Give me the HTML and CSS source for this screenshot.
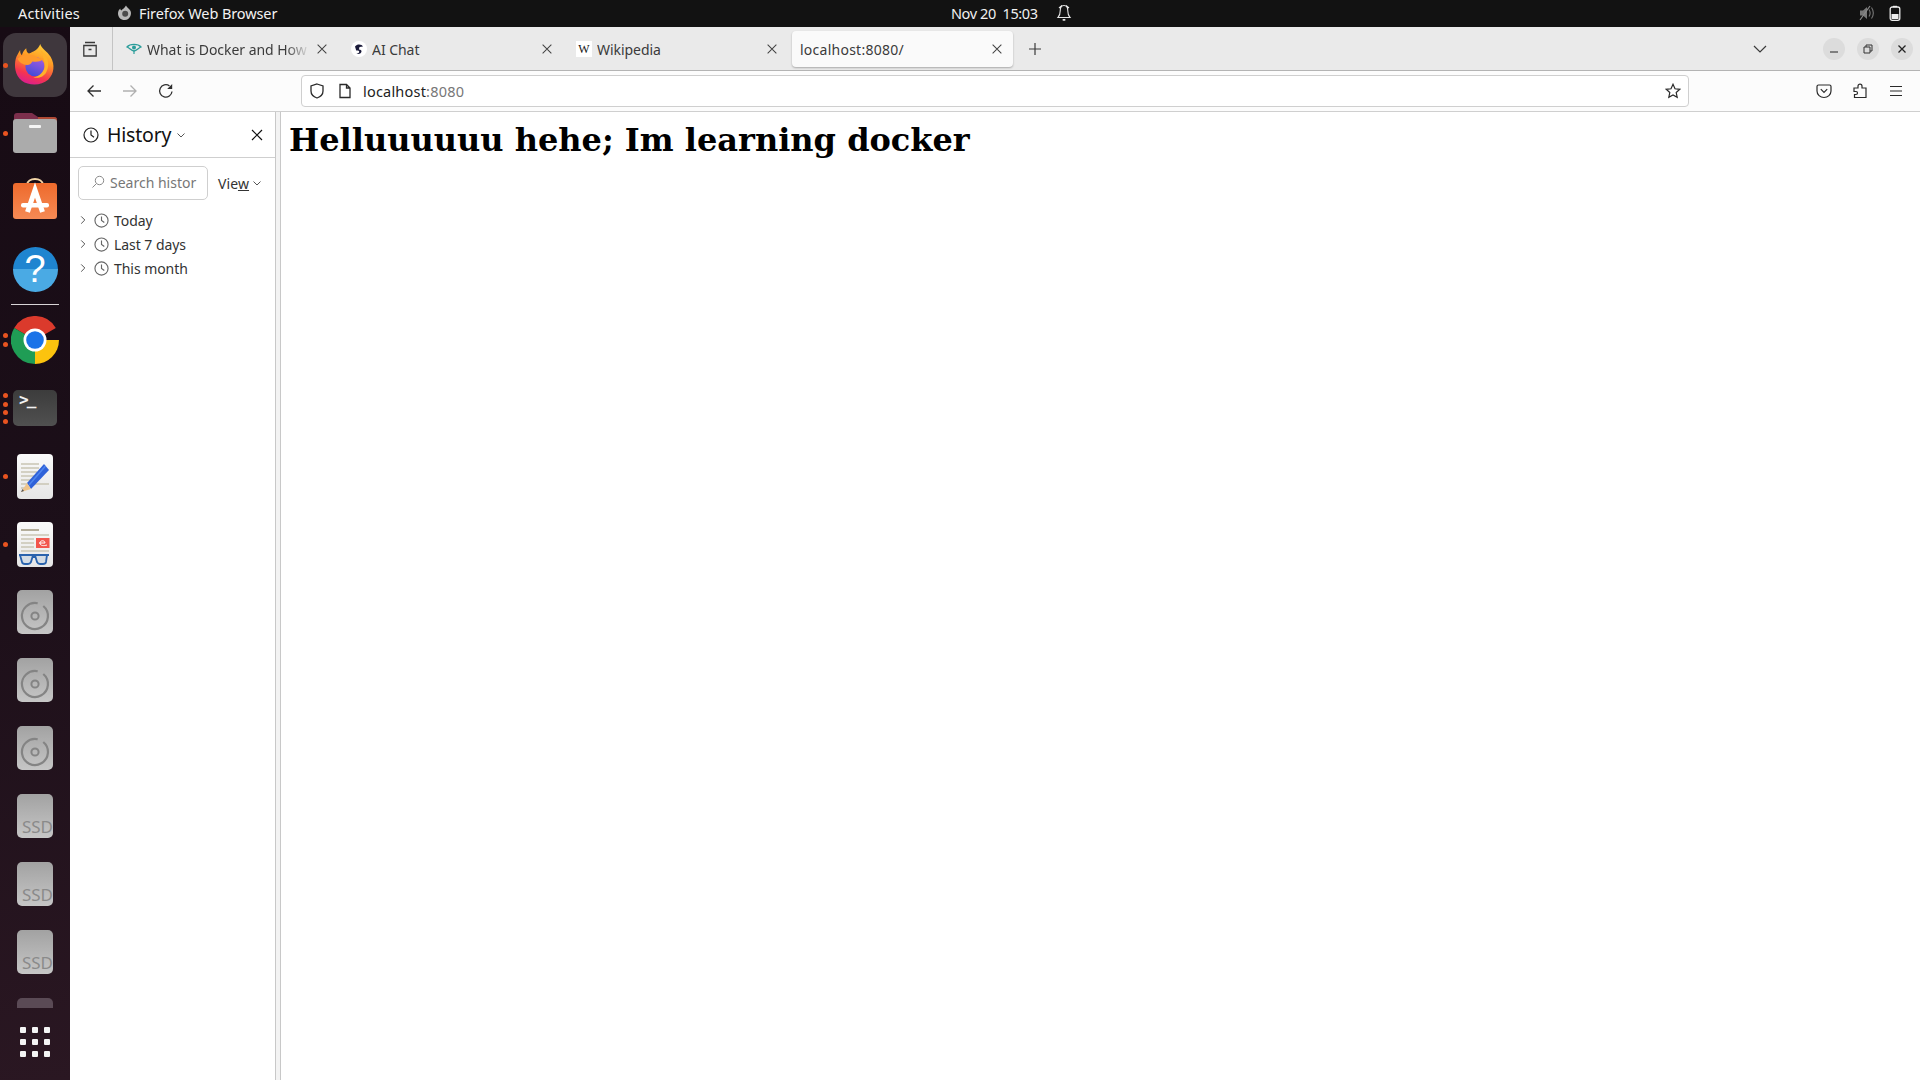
FILE: index.html
```html
<!DOCTYPE html>
<html lang="en">
<head>
<meta charset="utf-8">
<title>localhost:8080</title>
<link rel="stylesheet" href="styles.css">
</head>
<body>
<svg class="defs" width="0" height="0" aria-hidden="true">
  <defs>
    <symbol id="i-x" viewBox="0 0 16 16"><path d="M3 3l10 10M13 3L3 13" fill="none" stroke="currentColor" stroke-width="1.2"/></symbol>
    <symbol id="i-clock" viewBox="0 0 16 16"><circle cx="8" cy="8" r="7" fill="none" stroke="currentColor" stroke-width="1.2"/><path d="M8 3.6V8l3 2.2" fill="none" stroke="currentColor" stroke-width="1.2"/></symbol>
    <symbol id="i-chev" viewBox="0 0 10 10"><path d="M1.5 3.5L5 7l3.5-3.5" fill="none" stroke="currentColor" stroke-width="1"/></symbol>
    <symbol id="i-right" viewBox="0 0 10 10"><path d="M3.2 1.4L6.8 5 3.2 8.6" fill="none" stroke="currentColor" stroke-width="1"/></symbol>
    <symbol id="i-disc" viewBox="0 0 36 44"><circle cx="18" cy="26" r="3.6" fill="none" stroke="#848484" stroke-width="2"/><path d="M24 14.500A13 13 0 1 1 18 13" transform="rotate(12 18 26)" fill="none" stroke="#848484" stroke-width="2.200"/></symbol>
    <linearGradient id="g-ffbody" x1="0.75" y1="0" x2="0.4" y2="1"><stop offset="0" stop-color="#ffd23a"/><stop offset="0.4" stop-color="#ff9a24"/><stop offset="0.78" stop-color="#f5354f"/><stop offset="1" stop-color="#dc1f8c"/></linearGradient>
    <linearGradient id="g-ffglobe" x1="0.7" y1="0" x2="0.3" y2="1"><stop offset="0" stop-color="#a35be0"/><stop offset="1" stop-color="#3f4bd8"/></linearGradient>
    <linearGradient id="g-paper" x1="0" y1="0" x2="0" y2="1"><stop offset="0" stop-color="#fafafa"/><stop offset="1" stop-color="#e6e6e6"/></linearGradient>
    <linearGradient id="g-store" x1="0" y1="0" x2="0" y2="1"><stop offset="0" stop-color="#ee6a2c"/><stop offset="1" stop-color="#f58a55"/></linearGradient>
  </defs>
</svg>

<div class="screen">
  <header class="topbar">
    <span class="activities">Activities</span>
    <span class="appname">
      <svg class="top-ff" viewBox="0 0 16 16"><path d="M9 .5c.6 2 3.2 3 4.400 5.200 1.700 3.300-.4 9-5.400 9.300C4 15.200 1 12.300 1 8.500c0-2.200 1-4 2.300-5 0 1 .4 1.500 1 1.900C5.500 4.200 7 3.800 9 .5z" fill="#b9b9b9"/><circle cx="8.200" cy="8.800" r="3" fill="#4b4b4b"/></svg>
      <span>Firefox Web Browser</span>
    </span>
    <span class="clock">Nov 20&nbsp; 15:03</span>
    <svg class="bell" viewBox="0 0 16 18"><path d="M8 1.500c-3 0-3.800 2.500-3.800 5.500 0 3-.8 5-2.200 6.500h12c-1.400-1.500-2.200-3.500-2.200-6.500 0-3-.8-5.500-3.800-5.500zM6 1.500L3 4M10 1.500L13 4" fill="none" stroke="#e6e6e6" stroke-width="1.100"/><rect x="6.500" y="15" width="3" height="1.800" rx=".8" fill="#e6e6e6"/></svg>
    <span class="tray">
      <svg class="tray-vol" viewBox="0 0 16 16"><path d="M1 5.500h3L8 2v12l-4-3.500H1z" fill="#777"/><path d="M10 4.500c1.300 2 1.300 5 0 7M12.500 2.500c2.200 3.300 2.200 7.700 0 11" fill="none" stroke="#777" stroke-width="1.100"/><path d="M1 15L11 1" stroke="#8a8a8a" stroke-width="1.200"/></svg>
      <svg class="tray-bat" viewBox="0 0 12 16"><path d="M4 .8h4v1.400H4z" fill="#eee"/><rect x="1.200" y="2" width="9.600" height="13.300" rx="2" fill="none" stroke="#eee" stroke-width="1.300"/><rect x="2.500" y="9" width="7" height="5" fill="#eee"/></svg>
    </span>
  </header>

  <div class="desk">
    <nav class="dock">
      <div class="dock-scroll">
        <div class="slot slot-active">
          <span class="run run-1"></span>
          <svg class="ic-ff" viewBox="0 0 48 48">
            <path d="M30 1C31 6 38 9 42 16C47 25 46 35 39 42C31 49 17 49 9 43C1 37 0 26 2 18C3 14 5 12 7 8C7 12 8 13 9 14C10 10 12 8 14 6C14 9 15 11 17 12C22 10 28 7 30 1Z" fill="url(#g-ffbody)"/>
            <circle cx="24" cy="27" r="11" fill="url(#g-ffglobe)"/>
            <path d="M4 18C10 13 20 12 26 16C29 18 31 18 34 17C32 21 26 22 21 21C20 23 18 25 15 25C10 25 6 22 4 18Z" fill="#ff9a2b"/>
            <path d="M30 8C38 13 42 24 37 33C34 39 27 41 22 39C28 39 35 33 35 26C35 20 33 14 30 8Z" fill="#ffb12a"/>
          </svg>
        </div>
        <div class="slot">
          <span class="run run-1"></span>
          <svg class="ic-files" viewBox="0 0 44 40">
            <path d="M1 3a3 3 0 0 1 3-3h15l6 4h16a3 3 0 0 1 3 3v10H1z" fill="#7c2f4c"/>
            <path d="M25 4h16a3 3 0 0 1 3 3v6H25z" fill="#b04a34"/>
            <rect y="6" width="44" height="34" rx="3" fill="#ababab"/>
            <rect x="16" y="12" width="12" height="3" rx="1" fill="#f4f4f4"/>
          </svg>
        </div>
        <div class="slot">
          <svg class="ic-store" viewBox="0 0 44 42">
            <path d="M14 8C14 0 30 0 30 8" fill="none" stroke="#f3d6a8" stroke-width="1.800"/>
            <rect y="6" width="44" height="36" rx="3" fill="url(#g-store)"/>
            <path d="M14.500 35L22 13l7.500 22" fill="none" stroke="#fff" stroke-width="5"/>
            <rect x="8" y="26" width="28" height="4.500" rx="2" fill="#fff"/>
          </svg>
        </div>
        <div class="slot">
          <div class="ic-help">?</div>
        </div>
        <div class="dock-sep"></div>
        <div class="slot">
          <span class="run run-2a"></span><span class="run run-2b"></span>
          <svg class="ic-chrome" viewBox="0 0 48 48">
            <path d="M24 24L3.200 12A24 24 0 0 1 44.800 12z" fill="#db3a2c"/>
            <path d="M24 24H48A24 24 0 0 1 24 48z" fill="#fcc30e"/>
            <path d="M24 24L3.200 12A24 24 0 0 0 24 48z" fill="#1f9d55"/>
            <circle cx="24" cy="24" r="11.500" fill="#fff"/>
            <circle cx="24" cy="24" r="8.800" fill="#1a73e8"/>
          </svg>
        </div>
        <div class="slot">
          <span class="run run-4a"></span><span class="run run-4b"></span><span class="run run-4c"></span><span class="run run-4d"></span>
          <div class="ic-term"><span>&gt;_</span></div>
        </div>
        <div class="slot">
          <span class="run run-1"></span>
          <svg class="tile" viewBox="0 0 36 45">
            <rect width="36" height="45" rx="4" fill="url(#g-paper)"/>
            <path d="M4 10h18M4 14h18M4 18h16M4 22h14M4 26h12M4 30h28M4 34h8" stroke="#c9c5b4" stroke-width="1.700"/>
            <path d="M27 10L32 16L14 35L10 29Z" fill="#2f62d9"/>
            <path d="M28.500 12L12 31" stroke="#4f86ee" stroke-width="1.500"/>
            <path d="M10 29L14 35L4 38Z" fill="#edc48c"/>
            <path d="M4 38l3-1-1.500-2z" fill="#555"/>
          </svg>
        </div>
        <div class="slot">
          <span class="run run-1"></span>
          <svg class="tile" viewBox="0 0 36 45">
            <rect width="36" height="45" rx="4" fill="url(#g-paper)"/>
            <path d="M4 8h18" stroke="#b3ad9a" stroke-width="2"/>
            <path d="M4 13h28M4 17h13M4 21h13M4 25h13M4 29h28" stroke="#c9c5b4" stroke-width="1.600"/>
            <rect x="19" y="16" width="13.500" height="10" fill="#f2554d"/>
            <path d="M22 21h6c0-3-5-3-5 0 0 3 4 3 7 2" fill="none" stroke="#fff" stroke-width="1"/>
            <path d="M3 33l2 7q.4 2 3 2h3q2 0 3-2l1.500-5h3l1.500 5q1 2 3 2h3q2.600 0 3-2l1-7z" fill="#d4dce4"/>
            <path d="M2 33h30M3 33l2 7q.4 2 3 2h3q2 0 3-2l1.500-5h3l1.500 5q1 2 3 2h3q2.600 0 3-2l1-7" fill="none" stroke="#2a63ad" stroke-width="1.800"/>
          </svg>
        </div>
        <div class="slot"><div class="grey-tile"><svg class="disc" viewBox="0 0 36 44"><use href="#i-disc"/></svg></div></div>
        <div class="slot"><div class="grey-tile"><svg class="disc" viewBox="0 0 36 44"><use href="#i-disc"/></svg></div></div>
        <div class="slot"><div class="grey-tile"><svg class="disc" viewBox="0 0 36 44"><use href="#i-disc"/></svg></div></div>
        <div class="slot"><div class="grey-tile ssd"><span>SSD</span></div></div>
        <div class="slot"><div class="grey-tile ssd"><span>SSD</span></div></div>
        <div class="slot"><div class="grey-tile ssd"><span>SSD</span></div></div>
        <div class="slot"><div class="dark-tile"></div></div>
      </div>
      <div class="dock-apps">
        <div class="app-grid"><i></i><i></i><i></i><i></i><i></i><i></i><i></i><i></i><i></i></div>
      </div>
    </nav>

    <main class="browser">
      <div class="tabbar">
        <div class="fxview">
          <svg class="i18" viewBox="0 0 18 18"><path d="M4 2.500h10M2.800 6.500V16h12.400V5.500H2.800zM7.500 9.500h3" fill="none" stroke="#3a3a3a" stroke-width="1.300"/></svg>
        </div>
        <div class="tab">
          <svg class="favicon" viewBox="0 0 16 16"><path d="M1 6c3-3.500 11-3.500 14 0-3 1-4 4-7 4S4 7 1 6z" fill="none" stroke="#2a9d9a" stroke-width="1.300"/><circle cx="8" cy="6.500" r="2" fill="#2a9d9a"/><path d="M8 10v3" stroke="#2a9d9a" stroke-width="1.200"/></svg>
          <span class="tab-title fade">What is Docker and How Does</span>
          <svg class="tab-x"><use href="#i-x"/></svg>
        </div>
        <div class="tab">
          <svg class="favicon" viewBox="0 0 16 16"><circle cx="8" cy="8" r="8" fill="#fff"/><path d="M4 5.500C6 2.500 11 3 12 5.500L8.500 6l-.6 2.500c2 0 3 1 2.500 2.500-.6 1.800-3 2.500-5 1.500 2 0 3-.8 2.800-2-.2-1-1.400-1.200-3-1z" fill="#1b1b3a"/></svg>
          <span class="tab-title">AI Chat</span>
          <svg class="tab-x"><use href="#i-x"/></svg>
        </div>
        <div class="tab">
          <div class="favicon fav-w">W</div>
          <span class="tab-title">Wikipedia</span>
          <svg class="tab-x"><use href="#i-x"/></svg>
        </div>
        <div class="tab tab-active">
          <span class="tab-title">localhost:8080/</span>
          <svg class="tab-x"><use href="#i-x"/></svg>
        </div>
        <svg class="newtab" viewBox="0 0 14 14"><path d="M7 1v12M1 7h12" stroke="#3a3a3a" stroke-width="1.200"/></svg>
        <div class="tabbar-right">
          <svg class="alltabs" viewBox="0 0 14 8"><path d="M1 1l6 6 6-6" fill="none" stroke="#3a3a3a" stroke-width="1.200"/></svg>
          <div class="winbtns">
            <div class="winbtn"><svg viewBox="0 0 10 10"><path d="M1 8h8" stroke="#333" stroke-width="1.100"/></svg></div>
            <div class="winbtn"><svg viewBox="0 0 10 10"><path d="M1 3h6v6H1zM3 3V1h6v6H7" fill="none" stroke="#333" stroke-width="1"/></svg></div>
            <div class="winbtn"><svg viewBox="0 0 10 10"><path d="M1.500 1.500l7 7M8.500 1.500l-7 7" stroke="#222" stroke-width="1.300"/></svg></div>
          </div>
        </div>
      </div>

      <div class="toolbar">
        <div class="navbtns">
          <svg class="i16" viewBox="0 0 16 16"><path d="M15 8H2M7.500 2.500L2 8l5.500 5.500" fill="none" stroke="#2f2f2f" stroke-width="1.300"/></svg>
          <svg class="i16" viewBox="0 0 16 16"><path d="M1 8h13M8.500 2.500L14 8l-5.500 5.500" fill="none" stroke="#b0b0b0" stroke-width="1.300"/></svg>
          <svg class="i16" viewBox="0 0 16 16"><path d="M14 8.500A6.200 6.200 0 1 1 11.500 2.900" fill="none" stroke="#2f2f2f" stroke-width="1.300"/><path d="M14.200 1v5h-5z" fill="#2f2f2f"/></svg>
        </div>
        <div class="urlbar">
          <svg class="i16" viewBox="0 0 16 16"><path d="M8 1l6 2v5c0 4-3 6-6 7-3-1-6-3-6-7V3z" fill="none" stroke="#2a2a2a" stroke-width="1.300"/></svg>
          <svg class="i16 url-page" viewBox="0 0 16 16"><path d="M3 1.500h6.500L13 5v9.500H3zM9.500 1.500V5H13" fill="none" stroke="#2a2a2a" stroke-width="1.300"/></svg>
          <span class="url-text">localhost<span class="url-port">:8080</span></span>
          <svg class="i16 url-star" viewBox="0 0 16 16"><path d="M8 1.300l2 4.500 4.800.5-3.600 3.200 1 4.800L8 12l-4.200 2.300 1-4.800L1.200 6.300 6 5.800z" fill="none" stroke="#2a2a2a" stroke-width="1.200"/></svg>
        </div>
        <div class="toolbtns">
          <svg class="i16" viewBox="0 0 16 16"><path d="M2.500 2h11A1.500 1.500 0 0 1 15 3.500V8a7 6.500 0 0 1-14 0V3.500A1.500 1.500 0 0 1 2.500 2z" fill="none" stroke="#2a2a2a" stroke-width="1.200"/><path d="M4.800 6.200L8 9.400l3.200-3.200" fill="none" stroke="#2a2a2a" stroke-width="1.200"/></svg>
          <svg class="i16" viewBox="0 0 16 16"><path d="M2 5h4V3.200a2 2 0 1 1 4 0V5h4v9.500H2.500v-3H4a1.500 1.500 0 0 0 0-3H2z" fill="none" stroke="#2a2a2a" stroke-width="1.200"/></svg>
          <svg class="i16" viewBox="0 0 16 16"><path d="M2 3.500h12M2 8h12M2 12.500h12" stroke="#2a2a2a" stroke-width="1.200"/></svg>
        </div>
      </div>

      <div class="content">
        <aside class="sidebar">
          <div class="side-head">
            <svg class="side-clock"><use href="#i-clock"/></svg>
            <span class="side-title">History</span>
            <svg class="side-chev"><use href="#i-chev"/></svg>
            <svg class="side-close"><use href="#i-x"/></svg>
          </div>
          <div class="side-search">
            <div class="searchbox">
              <svg class="search-ic" viewBox="0 0 14 14"><circle cx="8.500" cy="5.500" r="4.200" fill="none" stroke="#8a8a8a" stroke-width="1"/><path d="M5.500 8.500L1.500 12.500" stroke="#8a8a8a" stroke-width="1"/></svg>
              <span class="search-ph">Search histor</span>
            </div>
            <span class="viewbtn">Vie<u>w</u></span>
            <svg class="view-chev"><use href="#i-chev"/></svg>
          </div>
          <ul class="tree">
            <li class="tree-row"><svg class="twisty"><use href="#i-right"/></svg><svg class="tree-clock"><use href="#i-clock"/></svg><span>Today</span></li>
            <li class="tree-row"><svg class="twisty"><use href="#i-right"/></svg><svg class="tree-clock"><use href="#i-clock"/></svg><span>Last 7 days</span></li>
            <li class="tree-row"><svg class="twisty"><use href="#i-right"/></svg><svg class="tree-clock"><use href="#i-clock"/></svg><span>This month</span></li>
          </ul>
        </aside>
        <div class="splitter"></div>
        <article class="page">
          <h1>Helluuuuuu hehe; Im learning docker</h1>
        </article>
      </div>
    </main>
  </div>
</div>
</body>
</html>
```
FILE: styles.css
```css
* { box-sizing: border-box; }
html, body { margin: 0; height: 100%; overflow: hidden; background: #fff; }
body { font-family: "Noto Sans", "Open Sans", sans-serif; color: #222; }
.defs { position: absolute; }
svg { display: block; flex: none; }

.screen { width: 1920px; height: 1080px; display: flex; flex-direction: column; }

/* top bar */
.topbar { height: 27px; flex: none; background: #121212; color: #f2f2f2; display: flex; align-items: center; font-size: 14.5px; padding: 0 0 2px 18px; letter-spacing: -0.1px; }
.activities { width: 99px; letter-spacing: 0.15px; }
.appname { display: flex; align-items: center; gap: 6px; width: 834px; }
.top-ff { width: 16px; height: 16px; }
.clock { width: 105px; color: #f0f0f0; letter-spacing: -0.4px; }
.bell { width: 16px; height: 18px; }
.tray { margin-left: auto; display: flex; align-items: center; gap: 14px; padding-right: 19px; }
.tray-vol { width: 16px; height: 16px; }
.tray-bat { width: 12px; height: 16px; }

.desk { flex: 1; display: flex; min-height: 0; }

/* dock */
.dock { width: 70px; flex: none; display: flex; flex-direction: column; background: linear-gradient(170deg, #170b14 0%, #1c0f19 50%, #2a1722 100%); }
.dock-scroll { height: 981px; flex: none; overflow: hidden; padding-top: 4px; }
.slot { height: 68px; display: flex; align-items: center; justify-content: center; position: relative; }
.slot-active::before { content: ""; position: absolute; left: 3px; right: 3px; top: 2px; bottom: 2px; border-radius: 13px; background: #3f373d; }
.slot-active svg { position: relative; }
.run { position: absolute; left: 3px; width: 5px; height: 5px; border-radius: 50%; background: #e95420; z-index: 1; }
.run-1 { top: 32px; }
.run-2a { top: 27px; }
.run-2b { top: 36px; }
.run-4a { top: 19px; }
.run-4b { top: 28px; }
.run-4c { top: 36px; }
.run-4d { top: 45px; }
.ic-ff { width: 42px; height: 44px; margin-top: -3px; }
.ic-files { width: 44px; height: 40px; }
.ic-store { width: 44px; height: 42px; margin-top: -6px; }
.ic-help { width: 45px; height: 45px; border-radius: 50%; background: linear-gradient(#1f85d0 50%, #4aaae4 50%); color: #fff; text-align: center; font-size: 38px; line-height: 45px; font-family: "Liberation Sans", sans-serif; }
.dock-sep { height: 3px; padding: 1px 11px; }
.dock-sep::before { content: ""; display: block; height: 1px; background: #d8d4d6; }
.ic-chrome { width: 48px; height: 48px; }
.ic-term { width: 44px; height: 36px; border-radius: 5px; background: linear-gradient(#3c3c3c, #505050); color: #f2f2f2; font: bold 16px/1 "DejaVu Sans Mono", monospace; letter-spacing: -2px; padding: 2px 0 0 6px; }
.tile { width: 36px; height: 45px; }
.grey-tile { width: 36px; height: 44px; border-radius: 5px; background: linear-gradient(#a2a2a2, #c6c6c6); display: flex; align-items: flex-end; justify-content: flex-end; }
.disc { width: 36px; height: 44px; }
.ssd span { font-size: 17px; line-height: 1; color: #8a8a8a; padding: 0 0 3px 0; }
.dark-tile { width: 36px; height: 44px; border-radius: 5px; background: #5a4a55; }
.dock-apps { flex: 1; display: flex; align-items: center; justify-content: center; padding-bottom: 4px; }
.app-grid { display: grid; grid-template-columns: repeat(3, 6px); gap: 6px; }
.app-grid i { width: 6px; height: 6px; border-radius: 1px; background: #f4f4f4; }

/* browser */
.browser { flex: 1; min-width: 0; display: flex; flex-direction: column; }
.tabbar { height: 44px; flex: none; display: flex; align-items: center; background: #eaeaea; border-bottom: 1px solid #b4b4b4; }
.fxview { width: 43px; height: 43px; border-right: 1px solid #c4c4c4; display: flex; align-items: center; justify-content: center; padding-right: 3px; margin-right: 2px; }
.i18 { width: 18px; height: 18px; }
.tab { width: 225px; height: 36px; padding: 0 11px 0 11px; display: flex; align-items: center; gap: 5px; font-size: 14px; color: #3b3b3b; border-radius: 4px; }
.tab-active { width: 221px; margin: 0 2px; padding: 0 9px 0 8px; background: #fafafa; box-shadow: 0 1px 2px rgba(0,0,0,.28); }
.tab-active .tab-title { letter-spacing: 0.25px; }
.favicon { width: 16px; height: 16px; flex: none; }
.fav-w { background: #fff; color: #111; font: 12px/16px "Liberation Serif", serif; text-align: center; }
.tab-title { flex: 1; min-width: 0; overflow: hidden; white-space: nowrap; letter-spacing: -0.05px; padding-top: 2px; }
.fade { -webkit-mask-image: linear-gradient(90deg, #000 85%, transparent); mask-image: linear-gradient(90deg, #000 85%, transparent); }
.tab-x { width: 14px; height: 14px; flex: none; color: #444; }
.newtab { width: 14px; height: 14px; margin-left: 13px; }
.tabbar-right { margin-left: auto; display: flex; align-items: center; }
.alltabs { width: 14px; height: 8px; margin-right: 56px; }
.winbtns { display: flex; gap: 12px; padding-right: 7px; }
.winbtn { width: 22px; height: 22px; border-radius: 50%; background: #dcdcdc; display: flex; align-items: center; justify-content: center; }
.winbtn svg { width: 10px; height: 10px; }

.toolbar { height: 41px; flex: none; display: flex; align-items: center; background: #fcfcfc; border-bottom: 1px solid #cfcfcf; }
.i16 { width: 16px; height: 16px; }
.navbtns { display: flex; gap: 20px; width: 231px; padding-left: 16px; }
.urlbar { width: 1388px; height: 32px; border: 1px solid #cfcfcf; border-radius: 4px; background: #fff; display: flex; align-items: center; padding: 0 7px; font-size: 14.5px; }
.url-page { margin-left: 12px; }
.url-text { margin-left: 10px; color: #222; letter-spacing: 0.2px; }
.url-port { color: #777; }
.url-star { margin-left: auto; }
.toolbtns { display: flex; gap: 20px; padding-left: 127px; }

.content { flex: 1; min-height: 0; display: flex; background: #fff; }
.sidebar { width: 206px; flex: none; border-right: 1px solid #c8c8c8; font-size: 14px; }
.side-head { height: 46px; display: flex; align-items: center; padding: 0 10px 0 13px; border-bottom: 1px solid #cfcfcf; color: #111; }
.side-clock { width: 16px; height: 16px; color: #222; }
.side-title { font-size: 19.5px; margin-left: 8px; letter-spacing: -0.2px; }
.side-chev { width: 10px; height: 10px; margin-left: 5px; color: #555; }
.side-close { width: 16px; height: 16px; margin-left: auto; color: #111; }
.side-search { height: 42px; padding: 8px 0 0 8px; display: flex; align-items: center; }
.searchbox { width: 130px; height: 34px; border: 1px solid #cfcfcf; border-radius: 5px; display: flex; align-items: center; padding: 0 0 2px 12px; gap: 5px; overflow: hidden; color: #777; }
.search-ic { width: 14px; height: 14px; }
.search-ph { white-space: nowrap; font-size: 14px; letter-spacing: 0; }
.viewbtn { margin-left: 10px; color: #333; font-size: 14px; letter-spacing: 0.1px; }
.view-chev { width: 10px; height: 10px; margin-left: 3px; color: #555; }
.tree { list-style: none; margin: 8px 0 0; padding: 0 0 0 8px; }
.tree-row { height: 24px; display: flex; align-items: center; font-size: 14px; color: #333; letter-spacing: -0.05px; }
.twisty { width: 10px; height: 10px; color: #555; }
.tree-clock { width: 15px; height: 15px; margin-left: 6px; color: #666; }
.tree-row span { margin-left: 5px; }
.splitter { width: 5px; flex: none; background: #f3f3f3; border-right: 1px solid #c8c8c8; }
.page { flex: 1; padding: 9px 8px 8px; }
.page h1 { margin: 0; font: bold 32px/38px "DejaVu Serif", serif; color: #000; }
```
